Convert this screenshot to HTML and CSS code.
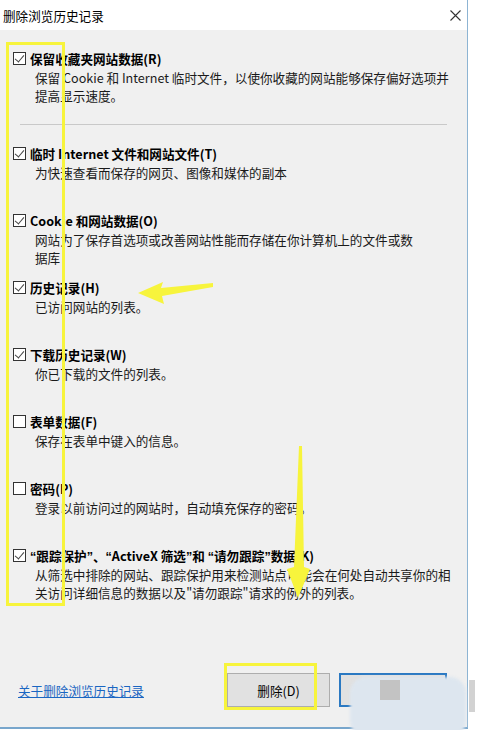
FILE: index.html
```html
<!DOCTYPE html>
<html lang="zh">
<head>
<meta charset="UTF-8">
<meta name="viewport" content="width=device-width, initial-scale=1.0">
<title>删除浏览历史记录</title>
<link rel="stylesheet" href="styles.css">
</head>
<body>

<div class="window">
  <div class="titlebar">
    <span class="title">删除浏览历史记录</span>
    <svg class="close" width="11" height="11" viewBox="0 0 11 11"><path d="M0.5 0.5 L10.5 10.5 M10.5 0.5 L0.5 10.5" stroke="#333" stroke-width="1.1" fill="none"/></svg>
  </div>

  <div class="content">
    <div class="option">
      <div class="option-label"><span class="check on"></span>保留收藏夹网站数据(R)</div>
      <p class="option-desc">保留 Cookie 和 Internet 临时文件，以使你收藏的网站能够保存偏好选项并<br>提高显示速度。</p>
    </div>

    <hr class="sep">

    <div class="option">
      <div class="option-label"><span class="check on"></span>临时 Internet 文件和网站文件(T)</div>
      <p class="option-desc">为快速查看而保存的网页、图像和媒体的副本</p>
    </div>

    <div class="option">
      <div class="option-label"><span class="check on"></span>Cookie 和网站数据(O)</div>
      <p class="option-desc">网站为了保存首选项或改善网站性能而存储在你计算机上的文件或数<br>据库</p>
    </div>

    <div class="option">
      <div class="option-label"><span class="check on"></span>历史记录(H)</div>
      <p class="option-desc">已访问网站的列表。</p>
    </div>

    <div class="option">
      <div class="option-label"><span class="check on"></span>下载历史记录(W)</div>
      <p class="option-desc">你已下载的文件的列表。</p>
    </div>

    <div class="option">
      <div class="option-label"><span class="check"></span>表单数据(F)</div>
      <p class="option-desc">保存在表单中键入的信息。</p>
    </div>

    <div class="option">
      <div class="option-label"><span class="check"></span>密码(P)</div>
      <p class="option-desc">登录以前访问过的网站时，自动填充保存的密码。</p>
    </div>

    <div class="option">
      <div class="option-label"><span class="check on"></span><span><span class="q">“</span>跟踪保护<span class="q">”</span>、<span class="q">“</span>ActiveX 筛选<span class="q">”</span>和 <span class="q">“</span>请勿跟踪<span class="q">”</span>数据(K)</span></div>
      <p class="option-desc">从筛选中排除的网站、跟踪保护用来检测站点可能会在何处自动共享你的相<br>关访问详细信息的数据以及"请勿跟踪"请求的例外的列表。</p>
    </div>

    <div class="footer">
      <a href="#" class="help-link">关于删除浏览历史记录</a>
      <div class="buttons">
        <button class="btn">删除(D)</button>
        <button class="btn btn-default">取消</button>
      </div>
    </div>
  </div>
</div>

<!-- 标注 -->
<div class="mark-box mark-list"></div>
<div class="mark-box mark-btn"></div>
<svg class="mark-arrows" width="480" height="730" viewBox="0 0 480 730">
  <polygon points="138,293 163,282 161,288 213,283 213,287 162,296 164,304" fill="#f7f43c"/>
  <polygon points="299,446 302,446 304,567 310,569 298,598 287,569 294,567" fill="#f7f43c"/>
</svg>
<div class="blur-blob"></div>
<div class="blur-square"></div>
<div class="edge-strip"></div>

</body>
</html>
```

FILE: styles.css
```css
body {
  margin: 0;
  width: 480px;
  height: 730px;
  overflow: hidden;
  position: relative;
  background: #fff;
  font-family: "Noto Sans CJK SC", "Microsoft YaHei", sans-serif;
  color: #111;
}

.window {
  width: 467px;
  height: 727px;
  border-right: 1px solid #8db4d3;
  border-bottom: 2px solid #78a6cc;
  display: flex;
  flex-direction: column;
}

.titlebar {
  height: 30px;
  flex: none;
  background: #fff;
  display: flex;
  align-items: center;
  justify-content: space-between;
  padding: 0 6px 0 3px;
}

.title {
  font-size: 12.6px;
  color: #000;
}

.content {
  flex: 1;
  background: #f0f0f0;
  display: flex;
  flex-direction: column;
  padding-top: 19px;
}

.option {
  height: 67px;
  padding-left: 13px;
}

.option-label {
  display: flex;
  align-items: center;
  gap: 4px;
  height: 18px;
  font-size: 12.6px;
  font-weight: bold;
  color: #000;
  white-space: nowrap;
}

.option-label .q {
  font-family: "Liberation Sans", Arial, sans-serif;
}

.check {
  width: 13px;
  height: 13px;
  box-sizing: border-box;
  border: 1px solid #333;
  background: #fff;
  flex: none;
  position: relative;
}

.check.on::after {
  content: "";
  position: absolute;
  left: 3px;
  top: 0px;
  width: 4px;
  height: 8px;
  border-right: 1.2px solid #444;
  border-bottom: 1.2px solid #444;
  transform: rotate(40deg);
}

.option-desc {
  margin: 2px 0 0 22px;
  font-size: 12.6px;
  line-height: 18px;
  white-space: nowrap;
  color: #1a1a1a;
}

.sep {
  margin: 8px 20px 19px 20px;
  border: 0;
  border-top: 1px solid #c9c9c9;
}

.footer {
  margin-top: auto;
  display: flex;
  align-items: center;
  padding: 0 20px 20px 18px;
}

.help-link {
  font-size: 12.6px;
  color: #1a66c2;
  text-decoration: underline;
}

.buttons {
  margin-left: auto;
  display: flex;
  gap: 9px;
}

.btn {
  width: 103px;
  height: 34px;
  background: #e1e1e1;
  border: 1px solid #adadad;
  font-family: inherit;
  font-size: 12.6px;
  color: #000;
  padding: 0;
}

.btn-default {
  width: 108px;
  border: 2px solid #2b79c2;
}

/* 标注层 */
.mark-box {
  position: absolute;
  border: 3px solid #f7f43c;
}

.mark-list {
  left: 6px;
  top: 42px;
  width: 53px;
  height: 558px;
}

.mark-btn {
  left: 224px;
  top: 663px;
  width: 87px;
  height: 41px;
}

.mark-arrows {
  position: absolute;
  left: 0;
  top: 0;
  pointer-events: none;
}

.blur-blob {
  position: absolute;
  left: 350px;
  top: 677px;
  width: 116px;
  height: 60px;
  background: #dde6ef;
  border-radius: 16px;
  filter: blur(1.5px);
}

.blur-square {
  position: absolute;
  left: 380px;
  top: 680px;
  width: 20px;
  height: 20px;
  background: #c3c3c3;
}

.edge-strip {
  position: absolute;
  left: 469px;
  top: 680px;
  width: 6px;
  height: 32px;
  background: #d2d2d2;
}
```
